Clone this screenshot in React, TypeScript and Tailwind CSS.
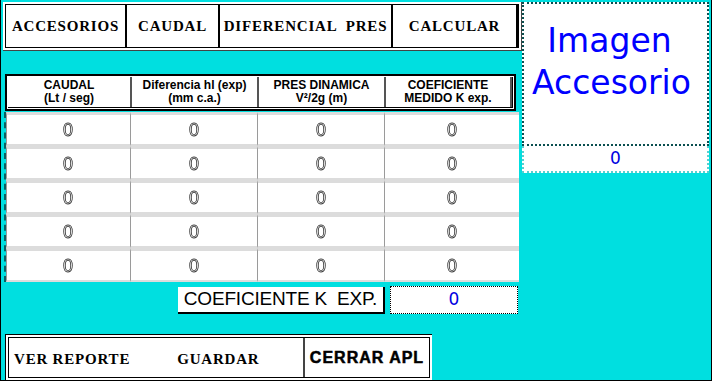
const rows = [0, 1, 2, 3, 4];
const colWidths = ['w-[124px]', 'w-[127px]', 'w-[127px]', 'w-[127px]'];

function Zero() {
  return (
    <span className="will-change-transform font-['Liberation_Sans',sans-serif] text-[18px] leading-none text-white [-webkit-text-stroke:0.8px_#333]">
      0
    </span>
  );
}

function ToolButton({ label, className }: { label: string; className: string }) {
  return (
    <div
      className={`flex items-center justify-center h-full border-r-2 border-black font-['Liberation_Serif',serif] font-bold text-[15px] tracking-[0.8px] text-black whitespace-pre ${className}`}
    >
      {label}
    </div>
  );
}

function HeaderCell({ top, bottom, className }: { top: string; bottom: string; className: string }) {
  return (
    <div
      className={`flex flex-col items-center justify-center h-full border-r-2 border-[#555] font-['Liberation_Sans',sans-serif] font-bold text-[12px] leading-[13px] text-black ${className}`}
    >
      <span>{top}</span>
      <span>{bottom}</span>
    </div>
  );
}

export default function App() {
  return (
    <div className="w-[712px] h-[381px] bg-[#00dfe0] border-l border-r border-b border-black flex overflow-hidden">
      {/* Left column */}
      <div className="w-[520px] flex flex-col pt-[2px] pl-[2px]">
        {/* Toolbar */}
        <div className="w-[519px] h-[49px] bg-white p-[2px] border-r border-b border-[#444]">
          <div className="flex h-full border border-black">
            <ToolButton label="ACCESORIOS" className="w-[121px]" />
            <ToolButton label="CAUDAL" className="w-[93px]" />
            <ToolButton label="DIFERENCIAL  PRES" className="w-[173px]" />
            <ToolButton label="CALCULAR" className="flex-1 border-r-0" />
          </div>
        </div>

        {/* Table header */}
        <div className="mt-[23px] ml-[2px] w-[511px] h-[37px] border-2 border-black bg-white p-[1px]">
          <div className="flex h-full border-b border-r border-black">
            <HeaderCell top="CAUDAL" bottom="(Lt / seg)" className={colWidths[0]} />
            <HeaderCell top="Diferencia hl (exp)" bottom="(mm c.a.)" className={colWidths[1]} />
            <HeaderCell top="PRES DINAMICA" bottom="V²/2g (m)" className={colWidths[2]} />
            <HeaderCell top="COEFICIENTE" bottom="MEDIDO K exp." className="flex-1 border-r-0" />
          </div>
        </div>

        {/* Data rows */}
        <div className="mt-[1px] ml-[1px] w-[515px] flex flex-col border-l-2 border-dashed border-[#0a5f60]">
          {rows.map((r) => (
            <div key={r} className="flex h-[34px]">
              {colWidths.map((w, i) => (
                <div
                  key={i}
                  className={`${i === 3 ? 'flex-1' : w} flex items-center justify-center bg-white border-t-[3px] border-b-[2px] border-[#dcdcdc] border-l border-l-dotted border-l-[#9a9a9a]`}
                >
                  <Zero />
                </div>
              ))}
            </div>
          ))}
        </div>

        {/* Coefficient */}
        <div className="flex mt-[4px] h-[28px] items-center">
          <div className="ml-[175px] w-[207px] h-[27px] bg-white border-r-2 border-b-2 border-black flex items-center justify-center font-['Liberation_Sans',sans-serif] text-[19px] tracking-[-0.2px] text-black whitespace-nowrap">
            COEFICIENTE K&nbsp; EXP.
          </div>
          <div className="ml-[5px] w-[128px] h-[28px] bg-white border border-dotted border-black flex items-center justify-center font-['DejaVu_Sans',sans-serif] text-[17px] text-[#0000e0]">
            0
          </div>
        </div>

        {/* Bottom buttons */}
        <div className="mt-[20px] ml-[2px] w-[427px] h-[46px] bg-white border-t border-l border-black p-[2px]">
          <div className="flex h-full border border-black">
            <div className="w-[296px] h-full flex items-center border-r-2 border-[#444] font-['Liberation_Serif',serif] font-bold text-[15px] tracking-[0.8px] text-black">
              <span className="ml-[5px] mt-[3px]">VER REPORTE</span>
              <span className="ml-[47px] mt-[3px]">GUARDAR</span>
            </div>
            <div className="flex-1 flex items-center justify-center font-['Liberation_Sans',sans-serif] font-black text-[16px] tracking-[1px] text-black [-webkit-text-stroke:0.5px_#000]">
              CERRAR APL
            </div>
          </div>
        </div>
      </div>

      {/* Right column */}
      <div className="flex flex-col pt-[2px] pl-[1px]">
        <div className="w-[187px] h-[144px] bg-white border-2 border-dotted border-[#0a4f50] flex flex-col items-center pt-[16px] pr-[12px] font-['DejaVu_Sans',sans-serif] text-[#0000ff] text-[33px] leading-[42px]">
          <span>Imagen</span>
          <span className="ml-[4px]">Accesorio</span>
        </div>
        <div className="w-[187px] h-[27px] bg-white border-x-2 border-b-2 border-dotted border-[#55d0d0] flex items-center justify-center font-['DejaVu_Sans',sans-serif] text-[17px] text-[#0000e0]">
          0
        </div>
      </div>
    </div>
  );
}
